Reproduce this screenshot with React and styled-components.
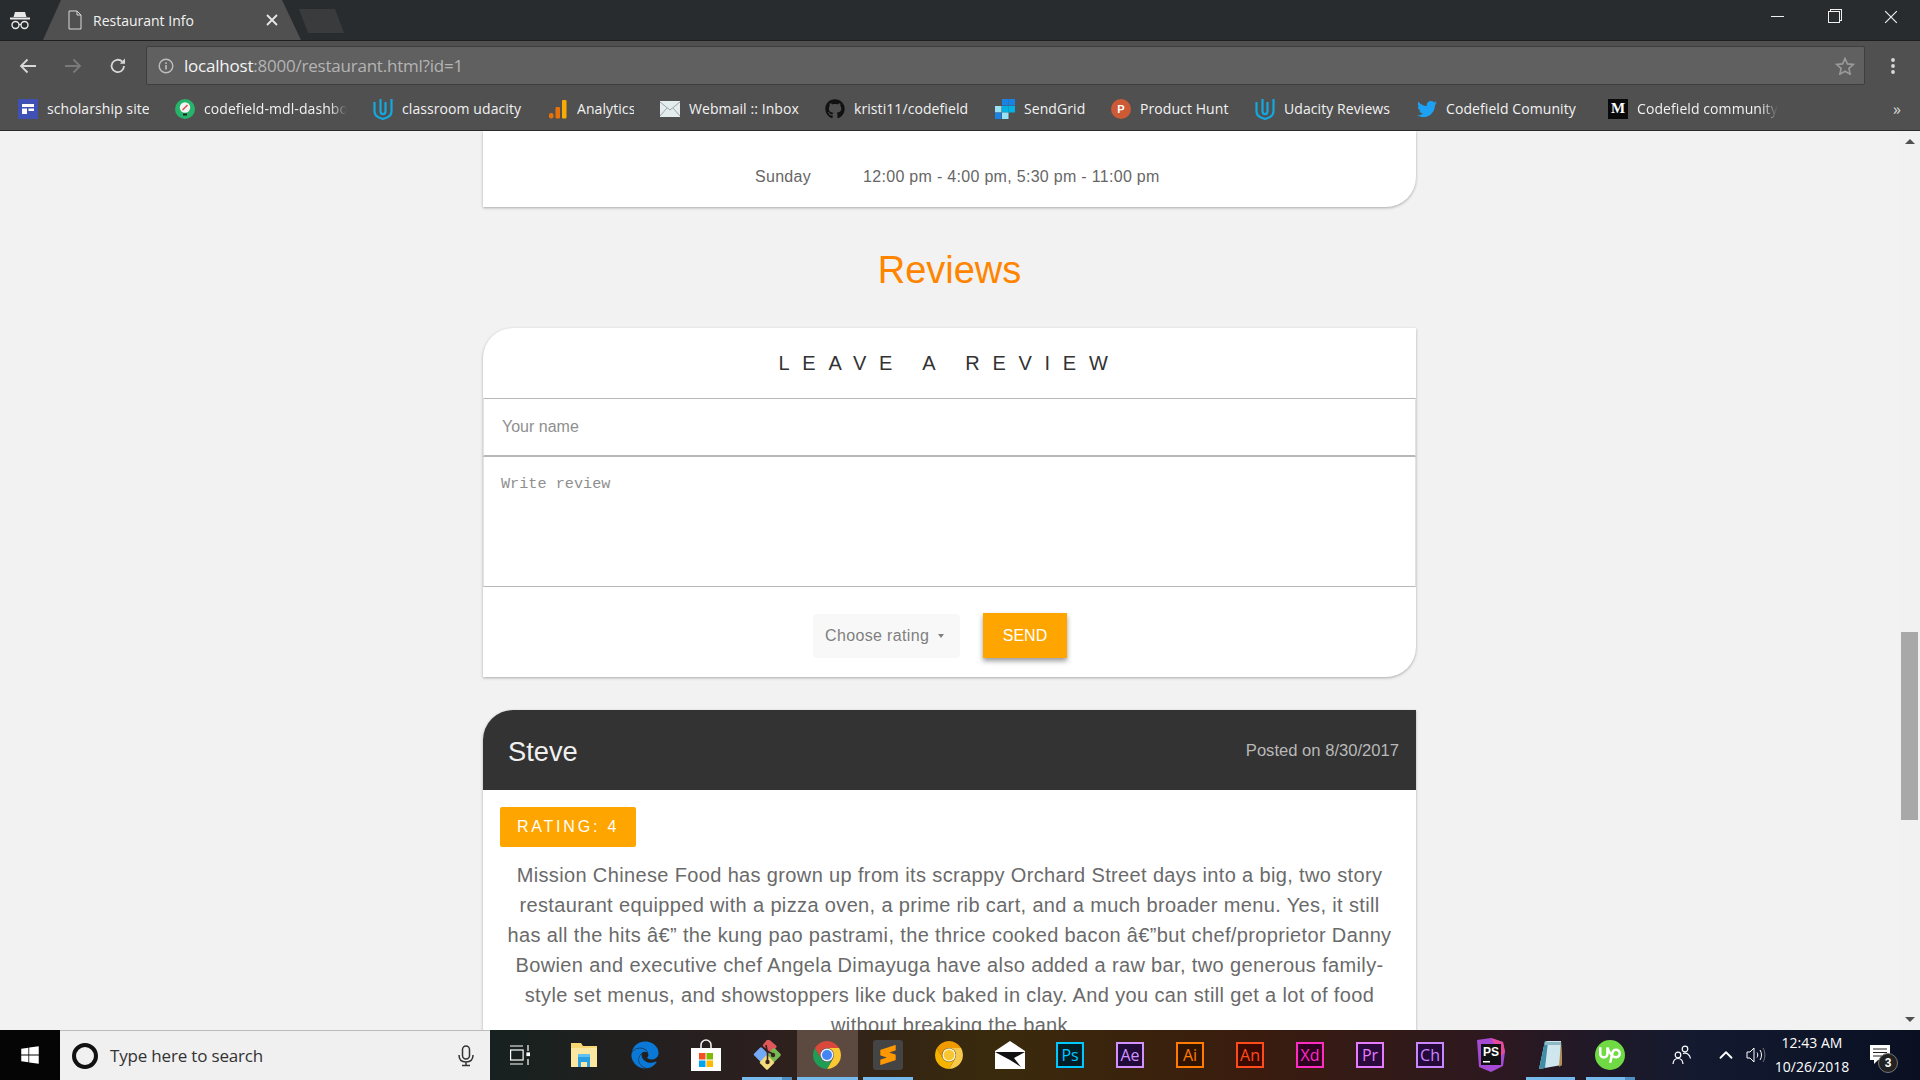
import styled, { createGlobalStyle } from 'styled-components';
import { FaEdge, FaGithub, FaTwitter, FaWindows } from 'react-icons/fa';
import { SiSublimetext, SiUpwork } from 'react-icons/si';
import { FiChevronUp } from 'react-icons/fi';

const GlobalStyle = createGlobalStyle`
  html, body {
    margin: 0;
    height: 100%;
    overflow: hidden;
    background: #f2f2f2;
  }
  * { box-sizing: border-box; }
`;

const UI_FONT = `"Open Sans", "Noto Sans", sans-serif`;
const WEB_FONT = `"Liberation Sans", Arial, sans-serif`;

//ICONS
const Incognito = () => (
  <svg width='22' height='22' viewBox='0 0 22 22' fill='none'>
    <path d='M6 3h10l1.5 5h-13z' fill='#e8e8e8' />
    <rect x='1' y='8.5' width='20' height='2' fill='#e8e8e8' />
    <circle cx='6.5' cy='16' r='3.5' stroke='#e8e8e8' strokeWidth='1.4' />
    <circle cx='15.5' cy='16' r='3.5' stroke='#e8e8e8' strokeWidth='1.4' />
    <path d='M10 15.5h2' stroke='#e8e8e8' strokeWidth='1.2' />
  </svg>
);

const FileIcon = () => (
  <svg width='14' height='20' viewBox='0 0 14 20' fill='none'>
    <path d='M1 1h8l4 4v14H1z' stroke='#d8d8d8' strokeWidth='1' />
    <path d='M9 1v4h4' stroke='#d8d8d8' strokeWidth='1' />
  </svg>
);

const CloseX = ({ size = 12, color = '#e8e8e8', width = 1.8 }) => (
  <svg width={size} height={size} viewBox='0 0 12 12' fill='none'>
    <path d='M1 1l10 10M11 1L1 11' stroke={color} strokeWidth={width} />
  </svg>
);

const ArrowIcon = ({ color, flip }) => (
  <svg width='18' height='16' viewBox='0 0 18 16' fill='none' style={flip ? { transform: 'scaleX(-1)' } : undefined}>
    <path d='M17 8H2M8.5 1.5L2 8l6.5 6.5' stroke={color} strokeWidth='1.8' />
  </svg>
);

const ReloadIcon = () => (
  <svg width='18' height='18' viewBox='0 0 18 18' fill='none'>
    <path d='M15 9a6.2 6.2 0 1 1-1.9-4.5' stroke='#d8d8d8' strokeWidth='1.8' />
    <path d='M16 1.5v5.2h-5.2z' fill='#d8d8d8' />
  </svg>
);

const InfoIcon = () => (
  <svg width='16' height='16' viewBox='0 0 16 16' fill='none'>
    <circle cx='8' cy='8' r='6.8' stroke='#bdbdbd' strokeWidth='1.4' />
    <rect x='7.2' y='7' width='1.6' height='4.5' fill='#bdbdbd' />
    <rect x='7.2' y='4.4' width='1.6' height='1.6' fill='#bdbdbd' />
  </svg>
);

const StarIcon = () => (
  <svg width='20' height='18' viewBox='0 0 20 18' fill='none'>
    <path d='M10 1.5l2.4 5.4 5.9.6-4.4 3.9 1.3 5.8L10 14.2l-5.2 3 1.3-5.8-4.4-3.9 5.9-.6z' stroke='#9a9a9a' strokeWidth='1.6' />
  </svg>
);

const DotsIcon = () => (
  <svg width='6' height='18' viewBox='0 0 6 18' fill='#d8d8d8'>
    <circle cx='3' cy='3' r='1.9' />
    <circle cx='3' cy='9' r='1.9' />
    <circle cx='3' cy='15' r='1.9' />
  </svg>
);

const SiteIcon = () => (
  <svg width='20' height='20' viewBox='0 0 20 20'>
    <rect width='20' height='20' fill='#3f51b5' />
    <rect x='4' y='5' width='12' height='3' fill='#fff' />
    <rect x='4' y='9.5' width='5' height='5.5' fill='#fff' />
    <rect x='10.5' y='9.5' width='5.5' height='2.5' fill='#fff' />
  </svg>
);

const CodefieldIcon = () => (
  <svg width='20' height='20' viewBox='0 0 20 20'>
    <circle cx='10' cy='10' r='10' fill='#26b36a' />
    <circle cx='10' cy='8.5' r='5.2' fill='#f4f4f4' />
    <path d='M7.5 11l5-5' stroke='#d9534f' strokeWidth='1.6' />
    <rect x='8' y='14.5' width='4' height='2' fill='#222' />
  </svg>
);

const UdacityIcon = () => (
  <svg width='20' height='22' viewBox='0 0 20 22' fill='none'>
    <path d='M1.500 4v9c0 3.500 2 5.500 4.500 6.500l4 1.500 4-1.500c2.500-1 4.500-3 4.500-6.500V1' stroke='#14a8e0' strokeWidth='2.2' />
    <path d='M7.500 1v12c0 2 1 3.200 2.500 3.200s2.500-1.200 2.500-3.200V4' stroke='#14a8e0' strokeWidth='2.2' />
  </svg>
);

const AnalyticsIcon = () => (
  <svg width='18' height='20' viewBox='0 0 18 20'>
    <rect x='0' y='14' width='4.500' height='5.500' rx='2' fill='#e8710a' />
    <rect x='6.500' y='8' width='4.500' height='11.500' rx='1' fill='#e8710a' />
    <rect x='13' y='1' width='4.500' height='18.500' rx='1' fill='#f9ab00' />
  </svg>
);

const MailIcon = () => (
  <svg width='20' height='16' viewBox='0 0 20 16'>
    <rect width='20' height='16' fill='#e4ecee' />
    <path d='M0 1l10 8 10-8M0 15l7-8M20 15l-7-8' stroke='#9aa6aa' strokeWidth='1' fill='none' />
  </svg>
);

const SendGridIcon = () => (
  <svg width='20' height='20' viewBox='0 0 20 20'>
    <rect x='7' y='0' width='6.500' height='6.500' fill='#1a82e2' />
    <rect x='13.500' y='0' width='6.500' height='6.500' fill='#1a82e2' />
    <rect x='0' y='7' width='6.500' height='6.500' fill='#99e1f4' />
    <rect x='7' y='7' width='6.500' height='6.500' fill='#00b2e3' />
    <rect x='13.500' y='7' width='6.500' height='6.500' fill='#00b2e3' />
    <rect x='0' y='13.500' width='6.500' height='6.500' fill='#1a82e2' />
    <rect x='7' y='13.500' width='6.500' height='6.500' fill='#99e1f4' />
  </svg>
);

const PHBadge = styled.span`
  width: 20px;
  height: 20px;
  border-radius: 50%;
  background: #cc5a35;
  color: #fff;
  font: bold 11px ${WEB_FONT};
  display: flex;
  align-items: center;
  justify-content: center;
`;

const MediumBadge = styled.span`
  width: 20px;
  height: 20px;
  background: #0a0a0a;
  color: #fff;
  font: bold 15px "Liberation Serif", serif;
  display: flex;
  align-items: center;
  justify-content: center;
`;

const ExplorerIcon = () => (
  <svg width='28' height='26' viewBox='0 0 28 26'>
    <path d='M1 1h10l2 3h14v21H1z' fill='#f7d774' />
    <path d='M1 6h26v19H1z' fill='#fbe6a2' />
    <path d='M8 15h12v10h-3v-5h-6v5H8z' fill='#2b9fe3' />
    <rect x='8' y='12' width='12' height='3' fill='#5fc1f0' />
  </svg>
);

const StoreIcon = () => (
  <svg width='30' height='32' viewBox='0 0 30 32' fill='none'>
    <path d='M10 10V6a5 5 0 0 1 10 0v4' stroke='#f2f2f2' strokeWidth='1.600' />
    <rect y='9' width='30' height='23' fill='#fff' />
    <rect x='8' y='14' width='6.500' height='6.500' fill='#f25022' />
    <rect x='15.500' y='14' width='6.500' height='6.500' fill='#7fba00' />
    <rect x='8' y='21.500' width='6.500' height='6.500' fill='#00a4ef' />
    <rect x='15.500' y='21.500' width='6.500' height='6.500' fill='#ffb900' />
  </svg>
);

const GitIcon = () => (
  <svg width='30' height='30' viewBox='0 0 30 30'>
    <rect x='11.500' y='1' width='12' height='9' rx='1.500' fill='#e0575a' transform='rotate(40 17 6)' />
    <rect x='3.500' y='9' width='11' height='11' rx='1.500' fill='#74a9f5' transform='rotate(45 9 14.500)' />
    <rect x='17' y='9.500' width='10.500' height='10.500' rx='1.500' fill='#76b852' transform='rotate(45 22 14.500)' />
    <rect x='9.500' y='17' width='11' height='11' rx='1.500' fill='#f3dc7c' transform='rotate(45 15 22.500)' />
    <path d='M14 5l1.500 8v9M15.500 12c3 0 4.500 1 5.500 3' stroke='#3a2320' strokeWidth='1.600' fill='none' />
    <circle cx='15.500' cy='22' r='2.200' fill='#3a2320' />
    <circle cx='21' cy='15' r='2.200' fill='#3a2320' />
  </svg>
);

const ChromeIcon = () => (
  <svg width='28' height='28' viewBox='0 0 28 28'>
    <path d='M1.880 7A14 14 0 0 1 26.120 7H14A7 7 0 0 0 7.940 17.500z' fill='#d9483b' />
    <path d='M26.120 7A14 14 0 0 1 14 28L20.060 17.500A7 7 0 0 0 14 7z' fill='#fbc934' />
    <path d='M14 28A14 14 0 0 1 1.880 7L7.940 17.500A7 7 0 0 0 20.060 17.500z' fill='#1f9d55' />
    <circle cx='14' cy='14' r='6.500' fill='#e8f0fe' />
    <circle cx='14' cy='14' r='5' fill='#4285f4' />
  </svg>
);

const CanaryIcon = () => (
  <svg width='28' height='30' viewBox='0 0 28 28' fill='none'>
    <path d='M1.880 7A14 14 0 0 1 26.120 7H14A7 7 0 0 0 7.940 17.500z' fill='#ef9a00' />
    <path d='M26.120 7A14 14 0 0 1 14 28L20.060 17.500A7 7 0 0 0 14 7z' fill='#f7c94a' />
    <path d='M14 28A14 14 0 0 1 1.880 7L7.940 17.500A7 7 0 0 0 20.060 17.500z' fill='#f5b400' />
    <circle cx='14' cy='14' r='6' fill='#f8c630' stroke='#fff3c4' strokeWidth='1.500' />
  </svg>
);

const EnvelopeIcon = () => (
  <svg width='30' height='28' viewBox='0 0 30 28'>
    <path d='M0 10L15 0l15 10v18H0z' fill='#fff' />
    <path d='M0 11h30L19 17l7 9-11-7-15-8z' fill='#111' />
    <path d='M0 13l11 7H0z' fill='#fff' />
  </svg>
);

const PhpStormIcon = () => (
  <svg width='30' height='34' viewBox='0 0 30 34'>
    <path d='M2 2l14-2 12 4 2 10-2 14-12 6-12-5z' fill='#a64ad4' />
    <path d='M16 0l12 4 2 10-4 4z' fill='#e84a9a' />
    <rect x='6' y='6' width='20' height='21' fill='#111' />
    <rect x='8' y='23' width='7' height='1.500' fill='#fff' />
  </svg>
);

const NotepadIcon = () => (
  <svg width='26' height='30' viewBox='0 0 26 30'>
    <path d='M8 1h16l1 24-23 4z' fill='#cfe6ee' />
    <path d='M2 29L8 1l3 1-3 26z' fill='#3f8ea6' />
    <path d='M24 1l1 24-3 2z' fill='#b58a4a' />
    <path d='M8 2h16v3H8z' fill='#8fb7c6' />
  </svg>
);

const CortanaRing = styled.span`
  width: 26px;
  height: 26px;
  border-radius: 50%;
  border: 4px solid #111;
`;

const MicIcon = () => (
  <svg width='16' height='22' viewBox='0 0 16 22' fill='none'>
    <rect x='4.500' y='1' width='7' height='13' rx='3.500' stroke='#333' strokeWidth='1.500' />
    <path d='M1 10c0 5 3 7 7 7s7-2 7-7M8 17v3M4 20.500h8' stroke='#333' strokeWidth='1.500' />
  </svg>
);

const TaskViewIcon = () => (
  <svg width='20' height='20' viewBox='0 0 20 20' fill='none' stroke='#fff' strokeWidth='1.200'>
    <path d='M0 1h13M0 19h13M18 0v6M18 14v6' />
    <rect x='0.600' y='5' width='12.500' height='10' />
    <rect x='17' y='8' width='2.500' height='2.500' fill='#fff' />
  </svg>
);

const PeopleIcon = () => (
  <svg width='20' height='20' viewBox='0 0 20 20' fill='none' stroke='#fff' strokeWidth='1.200'>
    <circle cx='6' cy='10' r='2.800' />
    <path d='M1 19c.3-3.500 2.300-5.500 5-5.500s4.700 2 5 5.500' />
    <circle cx='13' cy='4' r='2.800' />
    <path d='M11 8.500c3.500-1 6.800.6 7.500 5' />
  </svg>
);

const SpeakerIcon = () => (
  <svg width='20' height='20' viewBox='0 0 20 20' fill='none' stroke='#fff' strokeWidth='1'>
    <path d='M1 7h3l4-4v14l-4-4H1z' />
    <path d='M11 7.500c1 1.500 1 3.500 0 5M14 5c2 3 2 7 0 10' />
    <path d='M17 3c2.500 4 2.500 10 0 14' stroke='#777' />
  </svg>
);

const NoteIcon = () => (
  <svg width='20' height='20' viewBox='0 0 20 20' fill='#fff'>
    <path d='M0 0h20v15H8l-4 4v-4H0z' />
    <path d='M3 4h14M3 7.500h14M3 11h10' stroke='#222' strokeWidth='1.200' />
  </svg>
);

const BOOKMARKS = [
  { label: 'scholarship site', icon: <SiteIcon />, width: 102 },
  { label: 'codefield-mdl-dashboard', icon: <CodefieldIcon />, width: 143, fade: true },
  { label: 'classroom udacity', icon: <UdacityIcon />, width: 120 },
  { label: 'Analytics', icon: <AnalyticsIcon />, width: 57 },
  { label: 'Webmail :: Inbox', icon: <MailIcon />, width: 110 },
  { label: 'kristi11/codefield', icon: <FaGithub size={20} color='#111' />, width: 115 },
  { label: 'SendGrid', icon: <SendGridIcon />, width: 61 },
  { label: 'Product Hunt', icon: <PHBadge>P</PHBadge>, width: 89 },
  { label: 'Udacity Reviews', icon: <UdacityIcon />, width: 107 },
  { label: 'Codefield Comunity', icon: <FaTwitter size={20} color='#1da1f2' />, width: 136 },
  { label: 'Codefield community', icon: <MediumBadge>M</MediumBadge>, width: 141, fade: true },
];

const ADOBE_APPS = [
  { label: 'Ps', color: '#00c8ff', bg: '#001d26' },
  { label: 'Ae', color: '#d291ff', bg: '#1f0a38' },
  { label: 'Ai', color: '#ff7c00', bg: '#2e1300' },
  { label: 'An', color: '#ff4a1c', bg: '#3a0a00' },
  { label: 'Xd', color: '#ff2bc2', bg: '#2e001f' },
  { label: 'Pr', color: '#e77bff', bg: '#2a0a3a' },
  { label: 'Ch', color: '#c987ff', bg: '#24093a' },
];

const App = () => {
  return (
    <>
      <GlobalStyle />
      <StyledWindow>
        <TitleBar>
          <IncognitoSlot>
            <Incognito />
          </IncognitoSlot>
          <Tab>
            <FileIcon />
            <TabTitle>Restaurant Info</TabTitle>
            <CloseX />
          </Tab>
          <NewTab />
          <WindowControls>
            <MinimizeLine />
            <RestoreBox />
            <CloseX size={14} width={1} color='#f0f0f0' />
          </WindowControls>
        </TitleBar>

        <Toolbar>
          <NavButtons>
            <ArrowIcon color='#d8d8d8' />
            <ArrowIcon color='#7a7a7a' flip />
            <ReloadIcon />
          </NavButtons>
          <Omnibox>
            <InfoIcon />
            <UrlText>
              localhost<span>:8000/restaurant.html?id=1</span>
            </UrlText>
            <StarSlot>
              <StarIcon />
            </StarSlot>
          </Omnibox>
          <MenuSlot>
            <DotsIcon />
          </MenuSlot>
        </Toolbar>

        <BookmarkBar>
          {BOOKMARKS.map((item) => (
            <Bookmark key={item.label}>
              <BookmarkIcon>{item.icon}</BookmarkIcon>
              <BookmarkLabel $width={item.width} $fade={item.fade}>
                {item.label}
              </BookmarkLabel>
            </Bookmark>
          ))}
          <MoreBookmarks>»</MoreBookmarks>
        </BookmarkBar>

        <Viewport>
          <PageContent>
            <HoursCard>
              <HoursDay>Sunday</HoursDay>
              <HoursTime>12:00 pm - 4:00 pm, 5:30 pm - 11:00 pm</HoursTime>
            </HoursCard>

            <ReviewsHeading>Reviews</ReviewsHeading>

            <ReviewForm>
              <FormTitle>LEAVE A REVIEW</FormTitle>
              <NameInput placeholder='Your name' readOnly />
              <ReviewArea placeholder='Write review' readOnly />
              <FormFooter>
                <RatingSelect>
                  Choose rating
                  <Caret />
                </RatingSelect>
                <SendButton>SEND</SendButton>
              </FormFooter>
            </ReviewForm>

            <ReviewCard>
              <ReviewHeader>
                <ReviewerName>Steve</ReviewerName>
                <ReviewDate>Posted on 8/30/2017</ReviewDate>
              </ReviewHeader>
              <RatingBadge>RATING: 4</RatingBadge>
              <ReviewText>
                Mission Chinese Food has grown up from its scrappy Orchard Street days into a big, two story restaurant
                equipped with a pizza oven, a prime rib cart, and a much broader menu. Yes, it still has all the hits
                â€” the kung pao pastrami, the thrice cooked bacon â€”but chef/proprietor Danny Bowien and executive
                chef Angela Dimayuga have also added a raw bar, two generous family-style set menus, and showstoppers
                like duck baked in clay. And you can still get a lot of food without breaking the bank
              </ReviewText>
            </ReviewCard>
          </PageContent>

          <Scrollbar>
            <ScrollArrow />
            <ScrollThumb />
            <ScrollArrow $down />
          </Scrollbar>
        </Viewport>

        <Taskbar>
          <StartButton>
            <FaWindows size={20} color='#fff' />
          </StartButton>
          <SearchBox>
            <CortanaRing />
            <SearchText>Type here to search</SearchText>
            <MicIcon />
          </SearchBox>
          <TaskViewSlot>
            <TaskViewIcon />
          </TaskViewSlot>
          <TaskApp $wide>
            <ExplorerIcon />
          </TaskApp>
          <TaskApp $wide>
            <FaEdge size={28} color='#0a78d7' />
          </TaskApp>
          <TaskApp $wide>
            <StoreIcon />
          </TaskApp>
          <TaskApp $wide $open $stacked>
            <GitIcon />
          </TaskApp>
          <TaskApp $wide $open $active>
            <ChromeIcon />
          </TaskApp>
          <TaskApp $wide $open>
            <SublimeTile>
              <SiSublimetext size={20} color='#ff9800' />
            </SublimeTile>
          </TaskApp>
          <TaskApp $wide>
            <CanaryIcon />
          </TaskApp>
          <TaskApp $wide>
            <EnvelopeIcon />
          </TaskApp>
          {ADOBE_APPS.map((app) => (
            <TaskApp key={app.label}>
              <AdobeTile $color={app.color} $bg={app.bg}>
                {app.label}
              </AdobeTile>
            </TaskApp>
          ))}
          <TaskApp>
            <PhpStormWrap>
              <PhpStormIcon />
              <PhpStormLabel>PS</PhpStormLabel>
            </PhpStormWrap>
          </TaskApp>
          <TaskApp $open>
            <NotepadIcon />
          </TaskApp>
          <TaskApp $open $stacked>
            <UpworkBadge>
              <SiUpwork size={22} color='#fff' />
            </UpworkBadge>
          </TaskApp>

          <SystemTray>
            <PeopleIcon />
            <TrayChevron>
              <FiChevronUp size={22} color='#fff' />
            </TrayChevron>
            <SpeakerIcon />
            <Clock>
              <span>12:43 AM</span>
              <span>10/26/2018</span>
            </Clock>
            <NotificationSlot>
              <NoteIcon />
              <NotificationCount>3</NotificationCount>
            </NotificationSlot>
          </SystemTray>
        </Taskbar>
      </StyledWindow>
    </>
  );
};

export default App;

const StyledWindow = styled.div`
  height: 100vh;
  display: flex;
  flex-direction: column;
  overflow: hidden;
`;

const TitleBar = styled.div`
  height: 41px;
  flex: none;
  background: #292c2f;
  border-bottom: 1px solid #1e1f21;
  display: flex;
  align-items: flex-end;
`;

const IncognitoSlot = styled.div`
  width: 40px;
  height: 41px;
  display: flex;
  align-items: center;
  justify-content: center;
`;

const Tab = styled.div`
  width: 258px;
  margin-left: 3px;
  height: 40px;
  padding: 0 23px 0 25px;
  background: #505050;
  clip-path: polygon(0 100%, 18px 0, 239px 0, 100% 100%);
  display: flex;
  align-items: center;
  gap: 11px;
  color: #f2f2f2;
`;

const TabTitle = styled.span`
  flex: 1;
  font: 14px ${UI_FONT};
`;

const NewTab = styled.div`
  width: 45px;
  height: 24px;
  margin: 0 0 7px -2px;
  background: #3a3b3d;
  clip-path: polygon(20% 100%, 0 0, 80% 0, 100% 100%);
`;

const WindowControls = styled.div`
  margin-left: auto;
  height: 41px;
  padding: 0 22px 6px 0;
  display: flex;
  align-items: center;
  gap: 44px;
`;

const MinimizeLine = styled.span`
  width: 13px;
  height: 1px;
  background: #f0f0f0;
`;

const RestoreBox = styled.span`
  width: 12px;
  height: 12px;
  border: 1px solid #f0f0f0;
  box-shadow: 2px -2px 0 -1px #292c2f, 2px -2px 0 0 #f0f0f0;
`;

const Toolbar = styled.div`
  height: 44px;
  flex: none;
  background: #505050;
  display: flex;
  align-items: flex-end;
`;

const NavButtons = styled.div`
  width: 146px;
  height: 39px;
  padding: 0 19px;
  display: flex;
  align-items: center;
  justify-content: space-between;
`;

const Omnibox = styled.div`
  width: 1719px;
  height: 39px;
  background: #606060;
  border: 1px solid #3e3e3e;
  border-radius: 2px;
  display: flex;
  align-items: center;
  padding-left: 11px;
  gap: 10px;
`;

const UrlText = styled.span`
  font: 17px ${UI_FONT};
  letter-spacing: -0.22px;
  color: #f4f4f4;
  span {
    color: #b4b4b4;
  }
`;

const StarSlot = styled.span`
  margin-left: auto;
  margin-right: 9px;
  display: flex;
`;

const MenuSlot = styled.div`
  flex: 1;
  height: 39px;
  display: flex;
  align-items: center;
  justify-content: center;
`;

const BookmarkBar = styled.div`
  height: 46px;
  flex: none;
  background: #505050;
  border-bottom: 1px solid #2b2b2b;
  padding: 2px 0 0 18px;
  display: flex;
  align-items: center;
  gap: 26px;
`;

const Bookmark = styled.div`
  display: flex;
  align-items: center;
  gap: 9px;
`;

const BookmarkIcon = styled.span`
  width: 20px;
  height: 20px;
  display: flex;
  align-items: center;
  justify-content: center;
`;

const BookmarkLabel = styled.span`
  width: ${(p) => p.$width}px;
  white-space: nowrap;
  overflow: hidden;
  font: 14px ${UI_FONT};
  letter-spacing: 0.08px;
  color: #f2f2f2;
  ${(p) =>
    p.$fade &&
    `-webkit-mask-image: linear-gradient(to right, #000 88%, transparent);
     mask-image: linear-gradient(to right, #000 88%, transparent);`}
`;

const MoreBookmarks = styled.span`
  margin-left: auto;
  margin-right: 19px;
  font: 16px ${UI_FONT};
  color: #d8d8d8;
`;

const Viewport = styled.div`
  flex: 1;
  min-height: 0;
  display: flex;
  background: #f2f2f2;
`;

const PageContent = styled.div`
  flex: 1;
  overflow: hidden;
  font-family: ${WEB_FONT};
`;

const Scrollbar = styled.div`
  width: 21px;
  flex: none;
  background: #f1f1f1;
  padding: 8px 2px 8px;
  display: flex;
  flex-direction: column;
  align-items: center;
`;

const ScrollArrow = styled.span`
  width: 0;
  height: 0;
  border-left: 5px solid transparent;
  border-right: 5px solid transparent;
  ${(p) => (p.$down ? 'border-top: 5px solid #505050;' : 'border-bottom: 5px solid #505050;')}
`;

const ScrollThumb = styled.span`
  width: 17px;
  height: 188px;
  background: #a8a8a8;
  margin: 488px 0 auto;
`;

const Card = styled.div`
  width: 933px;
  margin: 0 auto;
  background: #fff;
  box-shadow: 0 1px 3px rgba(0, 0, 0, 0.3);
`;

const HoursCard = styled(Card)`
  height: 76px;
  border-bottom-right-radius: 30px;
  padding: 34px 0 0 272px;
  display: flex;
  gap: 52px;
  font-size: 16px;
  line-height: 24px;
  color: #666;
`;

const HoursDay = styled.span`
  letter-spacing: 0.3px;
`;

const HoursTime = styled.span`
  letter-spacing: 0.3px;
`;

const ReviewsHeading = styled.h2`
  margin: 0;
  height: 121px;
  padding-top: 40px;
  text-align: center;
  font-size: 38px;
  line-height: 46px;
  font-weight: 400;
  color: #ff8500;
`;

const ReviewForm = styled(Card)`
  border-top-left-radius: 30px;
  border-bottom-right-radius: 30px;
`;

const FormTitle = styled.h3`
  margin: 0;
  height: 70px;
  text-align: center;
  font-size: 20px;
  font-weight: 400;
  line-height: 70px;
  letter-spacing: 12.7px;
  color: #333;
`;

const NameInput = styled.input`
  display: block;
  width: 100%;
  height: 59px;
  border: solid #b8b8b8;
  border-width: 1px 1px 2px;
  border-left-color: #e2e2e2;
  border-right-color: #e2e2e2;
  padding: 0 18px;
  font: 16px ${WEB_FONT};
  outline: none;
  &::placeholder {
    color: #8f8f8f;
  }
`;

const ReviewArea = styled.textarea`
  display: block;
  width: 100%;
  height: 130px;
  border: 1px solid #e2e2e2;
  border-top: 0;
  border-bottom-color: #b8b8b8;
  padding: 19px 17px;
  font: 15.2px / 17px "Liberation Mono", monospace;
  resize: none;
  outline: none;
  &::placeholder {
    color: #8f8f8f;
  }
`;

const FormFooter = styled.div`
  height: 90px;
  padding: 26px 0 0 330px;
  display: flex;
  align-items: flex-start;
  gap: 23px;
`;

const RatingSelect = styled.div`
  width: 147px;
  height: 44px;
  margin-top: 1px;
  padding-left: 12px;
  background: #f8f8f8;
  border-radius: 4px;
  display: flex;
  align-items: center;
  gap: 9px;
  font-size: 16px;
  letter-spacing: 0.35px;
  color: #808080;
`;

const Caret = styled.span`
  width: 0;
  height: 0;
  border-left: 3px solid transparent;
  border-right: 3px solid transparent;
  border-top: 4px solid #808080;
`;

const SendButton = styled.button`
  width: 84px;
  height: 45px;
  border: 0;
  background: #ffa500;
  color: #fff;
  font: 16px ${WEB_FONT};
  box-shadow: 0 3px 5px rgba(0, 0, 0, 0.4);
`;

const ReviewCard = styled(Card)`
  margin-top: 33px;
  border-top-left-radius: 30px;
  overflow: hidden;
`;

const ReviewHeader = styled.div`
  height: 80px;
  background: #333;
  padding: 0 17px 0 25px;
  display: flex;
  align-items: center;
  justify-content: space-between;
`;

const ReviewerName = styled.span`
  padding-top: 4px;
  font-size: 27.3px;
  color: #f0f0f0;
`;

const ReviewDate = styled.span`
  padding-top: 2px;
  font-size: 16.6px;
  color: #b8b8b8;
`;

const RatingBadge = styled.div`
  width: 136px;
  height: 40px;
  margin: 17px 0 13px 17px;
  background: #ffa500;
  border-radius: 2px;
  display: flex;
  align-items: center;
  justify-content: center;
  font-size: 16px;
  letter-spacing: 2.8px;
  color: #fff;
`;

const ReviewText = styled.p`
  margin: 0;
  padding: 0 19px;
  text-align: center;
  font-size: 20px;
  line-height: 30px;
  letter-spacing: 0.36px;
  color: #6a6a6a;
`;

const Taskbar = styled.div`
  height: 50px;
  flex: none;
  display: flex;
  color: #fff;
  background: linear-gradient(
    to right,
    #0a0a0a 0,
    #17211f 500px,
    #2c1f1f 760px,
    #3a2a0c 1000px,
    #3a1c0e 1250px,
    #2c1820 1500px,
    #131a30 1700px,
    #0a1022 100%
  );
`;

const StartButton = styled.div`
  width: 60px;
  background: #050505;
  display: flex;
  align-items: center;
  justify-content: center;
`;

const SearchBox = styled.div`
  width: 430px;
  background: #f0f0f0;
  border-top: 1px solid #bcbcbc;
  padding: 0 16px 0 12px;
  display: flex;
  align-items: center;
  gap: 12px;
`;

const SearchText = styled.span`
  flex: 1;
  font: 17px ${UI_FONT};
  letter-spacing: -0.18px;
  color: #333;
`;

const TaskViewSlot = styled.div`
  width: 64px;
  padding-right: 4px;
  display: flex;
  align-items: center;
  justify-content: center;
`;

const TaskApp = styled.div`
  width: ${(p) => (p.$wide ? '60.75px' : '60px')};
  flex: none;
  display: flex;
  align-items: center;
  justify-content: center;
  position: relative;
  background: ${(p) => (p.$active ? '#5c4a40' : 'transparent')};
  ${(p) =>
    p.$open &&
    `&::after {
      content: '';
      position: absolute;
      bottom: 0;
      height: 3px;
      left: ${p.$active ? '0' : '5.5px'};
      right: ${p.$active ? '0' : '5.5px'};
      background: ${p.$stacked ? 'linear-gradient(to right, #76b9ed 79%, #4f8fc4 79%)' : '#76b9ed'};
    }`}
`;

const SublimeTile = styled.span`
  width: 30px;
  height: 30px;
  background: #444;
  border-radius: 3px;
  display: flex;
  align-items: center;
  justify-content: center;
`;

const AdobeTile = styled.span`
  width: 28px;
  height: 26px;
  border: 2px solid ${(p) => p.$color};
  background: ${(p) => p.$bg};
  color: ${(p) => p.$color};
  font: 16px ${UI_FONT};
  display: flex;
  align-items: center;
  justify-content: center;
`;

const PhpStormWrap = styled.span`
  position: relative;
  display: flex;
`;

const PhpStormLabel = styled.span`
  position: absolute;
  left: 8px;
  top: 7px;
  color: #fff;
  font: bold 12px ${WEB_FONT};
`;

const UpworkBadge = styled.span`
  width: 30px;
  height: 30px;
  border-radius: 50%;
  background: #6fda44;
  display: flex;
  align-items: center;
  justify-content: center;
`;

const SystemTray = styled.div`
  flex: 1;
  padding-left: 32px;
  display: flex;
  align-items: center;
`;

const TrayChevron = styled.span`
  margin-left: 23px;
  margin-right: 9px;
  display: flex;
`;

const Clock = styled.div`
  width: 90px;
  margin-left: 1px;
  display: flex;
  flex-direction: column;
  align-items: center;
  font: 14px / 24px ${UI_FONT};
`;

const NotificationSlot = styled.div`
  position: relative;
  margin-left: 13px;
  display: flex;
`;

const NotificationCount = styled.span`
  position: absolute;
  right: -8px;
  bottom: -8px;
  width: 20px;
  height: 20px;
  border-radius: 50%;
  background: #222;
  border: 1px solid #777;
  font: bold 12px ${WEB_FONT};
  display: flex;
  align-items: center;
  justify-content: center;
`;
